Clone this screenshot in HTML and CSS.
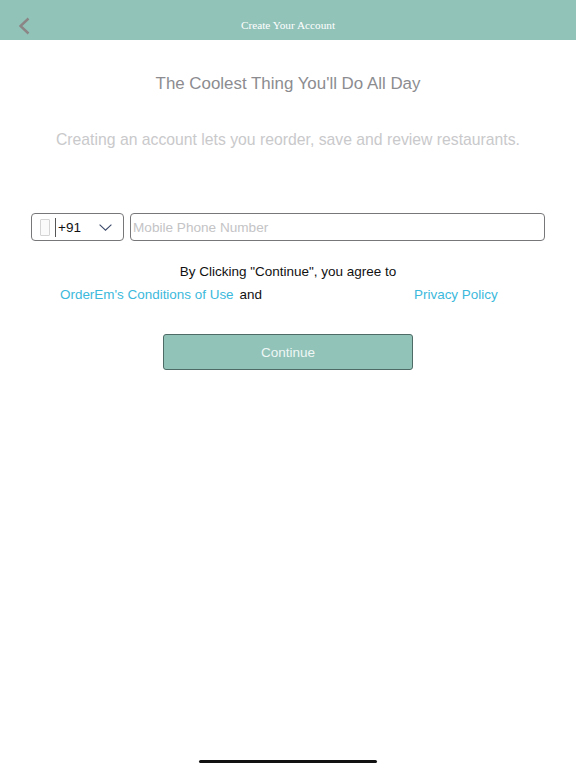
FILE: index.html
```html
<!DOCTYPE html>
<html lang="en">
<head>
    <meta charset="UTF-8">
    <meta name="viewport" content="width=device-width, initial-scale=1.0">
    <title>Create Your Account</title>
    <link rel="stylesheet" href="styles.css">
</head>
<body>
    <div class="screen">
        <header class="topbar">
            <svg class="back" width="12" height="18" viewBox="0 0 12 18">
                <path d="M10.5 1.5L2.5 9l8 7.5" fill="none" stroke="#8b8585" stroke-width="2.4"/>
            </svg>
            <div class="topbar-title">Create Your Account</div>
        </header>

        <h1 class="headline">The Coolest Thing You'll Do All Day</h1>
        <p class="subline">Creating an account lets you reorder, save and review restaurants.</p>

        <div class="phone-row">
            <div class="country">
                <span class="flag"></span>
                <span class="code">+91</span>
                <svg class="chevron" width="13" height="7" viewBox="0 0 13 7">
                    <path d="M.6.6L6.5 6.2 12.4.6" fill="none" stroke="#3c4a6b" stroke-width="1.1"/>
                </svg>
            </div>
            <div class="phone-input">Mobile Phone Number</div>
        </div>

        <p class="agree">By Clicking "Continue", you agree to</p>
        <div class="terms">
            <a class="link">OrderEm's Conditions of Use</a>
            <span class="and">and</span>
            <a class="link privacy">Privacy Policy</a>
        </div>

        <button class="continue">Continue</button>
    </div>
    <div class="home-bar"></div>
</body>
</html>
```

FILE: styles.css
```css
* {
    box-sizing: border-box;
    margin: 0;
    padding: 0;
}

body {
    font-family: 'Liberation Sans', Arial, sans-serif;
    width: 576px;
    height: 768px;
    background-color: #fff;
    overflow: hidden;
    position: relative;
}

.screen {
    display: flex;
    flex-direction: column;
    align-items: center;
}

.topbar {
    width: 100%;
    height: 40px;
    background-color: #92c3b9;
    position: relative;
    display: flex;
    justify-content: center;
    padding-top: 19px;
}

.back {
    position: absolute;
    left: 18px;
    top: 17px;
}

.topbar-title {
    font-family: 'Liberation Serif', serif;
    font-size: 11.25px;
    line-height: 13px;
    color: #fff;
}

.headline {
    margin-top: 32px;
    font-size: 16.9px;
    line-height: 24px;
    font-weight: normal;
    color: #8c8c90;
}

.subline {
    margin-top: 32px;
    font-size: 15.75px;
    line-height: 24px;
    color: #c9c9cb;
}

.phone-row {
    width: 514px;
    margin-top: 61px;
    display: flex;
    gap: 6px;
}

.country {
    width: 93px;
    height: 28px;
    flex: none;
    border: 1px solid #77777a;
    border-radius: 4px;
    display: flex;
    align-items: center;
    padding-left: 8px;
}

.flag {
    width: 10px;
    height: 17px;
    border: 1px solid #d4d4d4;
    border-radius: 1px;
    background-color: #fafafa;
}

.code {
    margin-left: 5px;
    padding-left: 2px;
    border-left: 1px solid #555;
    font-size: 13.5px;
    line-height: 19px;
    color: #111;
}

.chevron {
    margin-left: 18px;
}

.phone-input {
    flex: 1;
    height: 28px;
    border: 1px solid #77777a;
    border-radius: 4px;
    padding-left: 2px;
    font-size: 13.6px;
    line-height: 27px;
    color: #c4c4c6;
}

.agree {
    margin-top: 22px;
    font-size: 13.5px;
    line-height: 18px;
    color: #111;
}

.terms {
    width: 100%;
    margin-top: 5px;
    padding-left: 60px;
    display: flex;
    font-size: 13.45px;
    line-height: 18px;
}

.link {
    color: #3cb9dc;
}

.and {
    margin-left: 6px;
    color: #111;
}

.privacy {
    margin-left: 152px;
}

.continue {
    width: 250px;
    height: 36px;
    margin-top: 30px;
    background-color: #92c3b9;
    border: 1px solid #4f6b66;
    border-radius: 3px;
    font-family: inherit;
    font-size: 13.5px;
    color: #eef7f5;
}

.home-bar {
    position: absolute;
    left: 199px;
    top: 760px;
    width: 178px;
    height: 3px;
    border-radius: 2px;
    background-color: #111;
}
```
